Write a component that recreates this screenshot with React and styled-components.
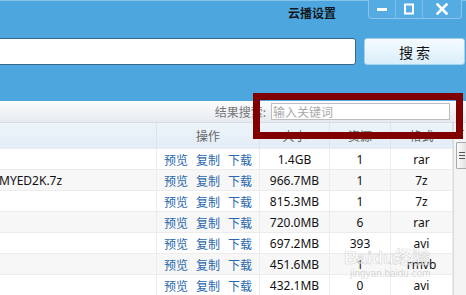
import styled, { createGlobalStyle } from 'styled-components'

const GlobalStyle = createGlobalStyle`
  html, body {
    margin: 0;
    padding: 0;
    background: #ffffff;
  }
  body {
    font-family: "Noto Sans", "Noto Sans CJK SC", sans-serif;
    font-size: 12px;
  }
`

const rows = [
  { name: '', size: '1.4GB', src: '1', fmt: 'rar' },
  { name: 'MYED2K.7z', size: '966.7MB', src: '1', fmt: '7z' },
  { name: '', size: '815.3MB', src: '1', fmt: '7z' },
  { name: '', size: '720.0MB', src: '6', fmt: 'rar' },
  { name: '', size: '697.2MB', src: '393', fmt: 'avi' },
  { name: '', size: '451.6MB', src: '1', fmt: 'rmvb' },
  { name: '', size: '432.1MB', src: '0', fmt: 'avi' },
]

const cols = '157px 103px 70px 61px 62px'

function App() {
  return (
    <>
      <GlobalStyle />
      <Window>
        <TopPanel>
          <TitleBar>
            <Title>云播设置</Title>
            <Controls>
              <CtrlButton>
                <svg width="12" height="12" viewBox="0 0 12 12">
                  <rect x="1" y="5" width="10" height="3" fill="#fff" />
                </svg>
              </CtrlButton>
              <CtrlButton>
                <svg width="12" height="12" viewBox="0 0 12 12">
                  <rect x="2" y="1.5" width="8" height="9" fill="none" stroke="#fff" strokeWidth="2" />
                </svg>
              </CtrlButton>
              <CtrlButton $wide>
                <svg width="12" height="12" viewBox="0 0 12 12">
                  <path d="M1.5 1.5 L10.5 10.5 M10.5 1.5 L1.5 10.5" stroke="#fff" strokeWidth="2.6" strokeLinecap="square" />
                </svg>
              </CtrlButton>
            </Controls>
          </TitleBar>
          <SearchRow>
            <SearchInput />
            <SearchButton>搜 索</SearchButton>
          </SearchRow>
        </TopPanel>

        <FilterBar>
          <FilterLabel>结果搜索:</FilterLabel>
          <FilterInput placeholder="输入关键词" />
        </FilterBar>

        <TableWrap>
          <Table>
            <HeadRow>
              <HeadCell />
              <HeadCell>操作</HeadCell>
              <HeadCell>大小</HeadCell>
              <HeadCell>资源</HeadCell>
              <HeadCell>格式</HeadCell>
            </HeadRow>
            {rows.map((r, i) => (
              <Row key={i} $alt={i % 2 === 1}>
                <NameCell>{r.name}</NameCell>
                <OpsCell>
                  <Op>预览</Op>
                  <Op>复制</Op>
                  <Op>下载</Op>
                </OpsCell>
                <Cell>{r.size}</Cell>
                <Cell>{r.src}</Cell>
                <Cell>{r.fmt}</Cell>
              </Row>
            ))}
          </Table>
          <Scrollbar>
            <ArrowUp />
            <Thumb>
              <Grip />
              <Grip />
              <Grip />
            </Thumb>
          </Scrollbar>
        </TableWrap>

        <Watermark>
          <Mark>Baidu经验</Mark>
          <MarkSmall>jingyan.baidu.com</MarkSmall>
        </Watermark>

        <Highlight />
      </Window>
    </>
  )
}

export default App

const Window = styled.div`
  position: relative;
  width: 466px;
  height: 295px;
  overflow: hidden;
  display: flex;
  flex-direction: column;
`

const TopPanel = styled.div`
  background: #4ea6de;
  border-top: 1px solid #86c3ec;
  padding-bottom: 36px;
  display: flex;
  flex-direction: column;
`

const TitleBar = styled.div`
  height: 25px;
  display: flex;
  justify-content: flex-end;
  align-items: flex-start;
`

const Title = styled.div`
  font-family: "Noto Sans CJK SC", sans-serif;
  font-weight: 700;
  font-size: 12px;
  line-height: 14px;
  color: #101820;
  padding-top: 5px;
  margin-right: 32px;
`

const Controls = styled.div`
  display: flex;
  height: 18px;
  margin-top: -1px;
  margin-right: 4px;
  background: #55ace2;
  border: 1px solid #8cc4ea;
  border-top: none;
  border-radius: 0 0 4px 4px;
`

const CtrlButton = styled.div`
  width: ${(p) => (p.$wide ? '38px' : '26px')};
  display: flex;
  align-items: center;
  justify-content: center;
  border-left: 1px solid #7fbde6;
  &:first-child {
    border-left: none;
  }
`

const SearchRow = styled.div`
  display: flex;
  align-items: center;
  gap: 8px;
  margin-top: 12px;
  padding-right: 1px;
`

const SearchInput = styled.input`
  flex: 1;
  height: 27px;
  box-sizing: border-box;
  margin-left: -4px;
  border: 1px solid #36698a;
  border-radius: 3px;
  background: #fff;
  outline: none;
`

const SearchButton = styled.button`
  width: 101px;
  height: 27px;
  box-sizing: border-box;
  border: 1px solid #a6d0ec;
  border-radius: 3px;
  background: linear-gradient(#f5fbff, #d9eefb);
  font-family: "Noto Sans CJK SC", sans-serif;
  font-size: 14px;
  color: #111;
  padding: 0;
`

const FilterBar = styled.div`
  height: 30px;
  box-sizing: border-box;
  display: flex;
  justify-content: flex-end;
  align-items: center;
  padding-right: 16px;
  background: linear-gradient(#fbfcfd, #e6eaef);
  border-bottom: 1px solid #d7dde4;
`

const FilterLabel = styled.span`
  font-family: "Noto Sans CJK SC", sans-serif;
  color: #777;
  font-size: 12px;
  margin-right: 5px;
`

const FilterInput = styled.input`
  width: 179px;
  height: 17px;
  box-sizing: border-box;
  border: 1px solid #bdbdbd;
  padding: 0 1px;
  font-family: "Noto Sans CJK SC", sans-serif;
  font-size: 12px;
  outline: none;
  &::placeholder {
    color: #aaa;
  }
`

const TableWrap = styled.div`
  flex: 1;
  display: flex;
`

const Table = styled.div`
  flex: 1;
  display: flex;
  flex-direction: column;
`

const HeadRow = styled.div`
  display: grid;
  grid-template-columns: ${cols};
  height: 25px;
  background: linear-gradient(#edf4fa, #e3edf7);
`

const HeadCell = styled.div`
  display: flex;
  align-items: center;
  justify-content: center;
  border-right: 1px solid #dbe3eb;
  font-family: "Noto Sans CJK SC", sans-serif;
  color: #666;
  font-size: 12px;
`

const Row = styled.div`
  display: grid;
  grid-template-columns: ${cols};
  height: 21px;
  box-sizing: border-box;
  border-top: 1px solid #ececec;
  background: ${(p) => (p.$alt ? '#f7f7f7' : '#ffffff')};
`

const Cell = styled.div`
  display: flex;
  align-items: center;
  justify-content: center;
  border-right: 1px solid #ececec;
  color: #111;
  font-size: 12px;
  white-space: nowrap;
`

const NameCell = styled(Cell)`
  justify-content: flex-start;
  text-indent: -1px;
  overflow: hidden;
`

const OpsCell = styled(Cell)`
  justify-content: flex-start;
  padding-left: 7px;
  gap: 8px;
`

const Op = styled.span`
  font-family: "Noto Sans CJK SC", sans-serif;
  color: #2868ae;
  font-size: 12px;
`

const Scrollbar = styled.div`
  width: 12px;
  background: #f4f4f4;
  border-left: 1px solid #dadada;
  display: flex;
  flex-direction: column;
  align-items: flex-end;
`

const ArrowUp = styled.div`
  width: 0;
  height: 0;
  margin: 4px 2px 0 0;
  border-left: 3px solid transparent;
  border-right: 3px solid transparent;
  border-bottom: 4px solid #333;
`

const Thumb = styled.div`
  margin-top: 11px;
  width: 10px;
  height: 27px;
  box-sizing: border-box;
  border: 1px solid #a9a9a9;
  border-right: none;
  border-radius: 2px 0 0 2px;
  background: linear-gradient(90deg, #fafafa, #e4e4e4);
  display: flex;
  flex-direction: column;
  justify-content: center;
  align-items: center;
  gap: 2px;
`

const Grip = styled.div`
  width: 6px;
  height: 1px;
  background: #555;
`

const Watermark = styled.div`
  position: absolute;
  left: 344px;
  top: 248px;
  display: flex;
  flex-direction: column;
  align-items: flex-start;
  pointer-events: none;
`

const Mark = styled.div`
  font-family: "Liberation Sans", "Noto Sans CJK SC", sans-serif;
  font-weight: 700;
  font-size: 18px;
  line-height: 20px;
  color: rgba(255, 255, 255, 0.55);
  -webkit-text-stroke: 0.6px rgba(150, 150, 150, 0.4);
`

const MarkSmall = styled.div`
  font-family: "Liberation Sans", sans-serif;
  font-size: 10px;
  line-height: 11px;
  color: rgba(160, 160, 160, 0.4);
  margin-left: 6px;
`

const Highlight = styled.div`
  position: absolute;
  left: 253px;
  top: 93px;
  width: 210px;
  height: 46px;
  box-sizing: border-box;
  border: 7px solid #800000;
  pointer-events: none;
`
